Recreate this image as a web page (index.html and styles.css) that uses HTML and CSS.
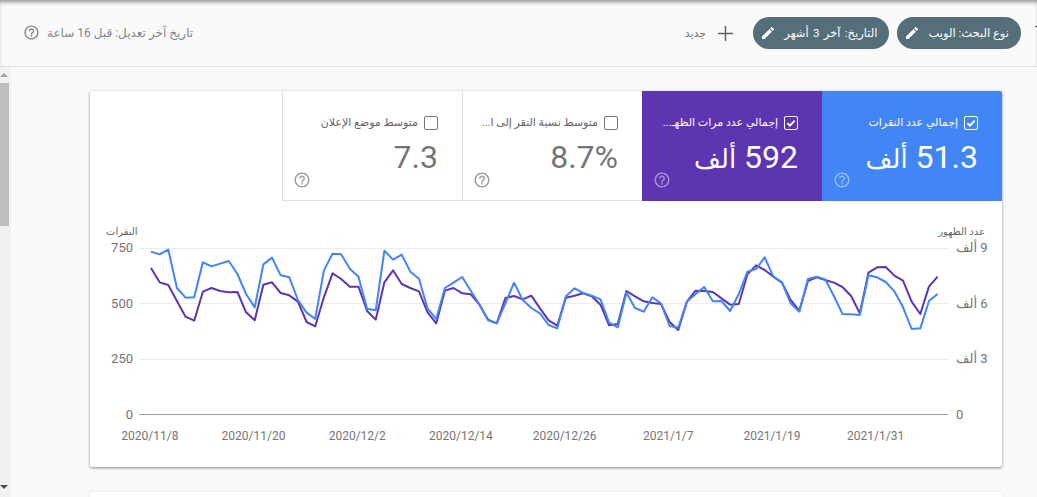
FILE: index.html
```html
<!DOCTYPE html>
<html lang="ar" dir="rtl">
<head>
<meta charset="utf-8">
<title>Performance</title>
<link rel="stylesheet" href="styles.css">
</head>
<body>
<svg class="defs" width="0" height="0" aria-hidden="true">
  <symbol id="help" viewBox="0 0 24 24"><path d="M11 18h2v-2h-2v2zm1-16C6.48 2 2 6.48 2 12s4.48 10 10 10 10-4.48 10-10S17.52 2 12 2zm0 18c-4.41 0-8-3.59-8-8s3.59-8 8-8 8 3.59 8 8-3.59 8-8 8zm0-14c-2.21 0-4 1.79-4 4h2c0-1.1.9-2 2-2s2 .9 2 2c0 2-3 1.75-3 5h2c0-2.25 3-2.5 3-5 0-2.21-1.79-4-4-4z"/></symbol>
  <symbol id="pencil" viewBox="0 0 24 24"><path d="M3 17.25V21h3.75L17.81 9.94l-3.75-3.75L3 17.25zM20.71 7.04a1 1 0 0 0 0-1.41l-2.34-2.34a1 1 0 0 0-1.41 0l-1.83 1.83 3.75 3.75 1.83-1.83z"/></symbol>
  <symbol id="check" viewBox="0 0 14 14"><path d="M2.8 7.2l2.9 2.9 5.6-5.8" fill="none" stroke="currentColor" stroke-width="2"/></symbol>
</svg>

<header class="topbar">
  <span class="clipped-icon"></span>
  <div class="chip"><span>نوع البحث: الويب</span><svg class="chip-icon"><use href="#pencil"/></svg></div>
  <div class="chip chip-wide"><span>التاريخ: آخر 3 أشهر</span><svg class="chip-icon"><use href="#pencil"/></svg></div>
  <button class="new-btn">
    <svg class="plus" viewBox="0 0 16 16"><path d="M7.2 0h1.6v7.2H16v1.6H8.8V16H7.2V8.8H0V7.2h7.2z"/></svg>
    <span>جديد</span>
  </button>
  <div class="updated"><span>تاريخ آخر تعديل: قبل 16 ساعة</span><svg class="help help-top"><use href="#help"/></svg></div>
</header>

<div class="main">
  <div class="content">
    <section class="card">
      <div class="tiles">
        <div class="tile tile-blue">
          <div class="tile-head"><span class="box"><svg><use href="#check"/></svg></span><span class="tile-label">إجمالي عدد النقرات</span></div>
          <div class="tile-value">51.3 <span class="unit">ألف</span></div>
          <svg class="help"><use href="#help"/></svg>
        </div>
        <div class="tile tile-purple">
          <div class="tile-head"><span class="box"><svg><use href="#check"/></svg></span><span class="tile-label">إجمالي عدد مرات الظهـ...</span></div>
          <div class="tile-value">592 <span class="unit">ألف</span></div>
          <svg class="help"><use href="#help"/></svg>
        </div>
        <div class="tile tile-plain">
          <div class="tile-head"><span class="box"></span><span class="tile-label">متوسط نسبة النقر إلى ا...</span></div>
          <div class="tile-value">8.7%</div>
          <svg class="help"><use href="#help"/></svg>
        </div>
        <div class="tile tile-plain">
          <div class="tile-head"><span class="box"></span><span class="tile-label">متوسط موضع الإعلان</span></div>
          <div class="tile-value">7.3</div>
          <svg class="help"><use href="#help"/></svg>
        </div>
      </div>

      <div class="chart" dir="ltr">
        <div class="axis-titles">
          <span dir="rtl">النقرات</span>
          <span dir="rtl">عدد الظهور</span>
        </div>
        <div class="chart-body">
          <div class="y-axis y-left"><span>750</span><span>500</span><span>250</span><span>0</span></div>
          <div class="plot">
            <div class="grid-row"></div>
            <div class="grid-row"></div>
            <div class="grid-row"></div>
            <div class="grid-base"></div>
            <svg class="lines" viewBox="0 0 91 390" preserveAspectRatio="none">
              <polyline class="line-purple" points="0,144 1,187 2,195 3,243 4,290 5,302 6,215 7,204 8,213 9,217 10,216 11,277 12,301 13,194 14,187 15,219 16,226 17,245 18,306 19,319 20,232 21,160 22,177 23,200 24,200 25,273 26,299 27,187 28,151 29,192 30,204 31,214 32,277 33,310 34,212 35,204 36,220 37,223 38,254 39,299 40,310 41,234 42,228 43,238 44,227 45,265 46,301 47,317 48,233 49,227 50,220 51,229 52,254 53,316 54,312 55,213 56,229 57,244 58,249 59,252 60,306 61,330 62,245 63,212 64,213 65,216 66,235 67,254 68,252 69,163 70,136 71,150 72,170 73,188 74,240 75,272 76,183 77,172 78,180 79,188 80,201 81,228 82,280 83,158 84,142 85,141 86,167 87,182 88,245 89,282 90,200 91,170"/>
              <polyline class="line-blue" points="0,95 1,103 2,89 3,204 4,233 5,232 6,127 7,139 8,131 9,123 10,162 11,222 12,262 13,133 14,113 15,166 16,172 17,240 18,278 19,297 20,152 21,101 22,103 23,146 24,170 25,266 26,271 27,92 28,119 29,104 30,155 31,176 32,266 33,297 34,204 35,188 36,171 37,212 38,254 39,301 40,310 41,250 42,188 43,240 44,264 45,280 46,315 47,325 48,229 49,205 50,219 51,227 52,238 53,308 54,322 55,218 56,264 57,275 58,232 59,250 60,318 61,323 62,245 63,222 64,201 65,244 66,243 67,273 68,222 69,155 70,147 71,112 72,170 73,188 74,250 75,275 76,177 77,170 78,178 79,228 80,282 81,283 82,285 83,166 84,172 85,186 86,214 87,262 88,327 89,325 90,243 91,222"/>
            </svg>
          </div>
          <div class="y-axis y-right"><span dir="rtl">9 ألف</span><span dir="rtl">6 ألف</span><span dir="rtl">3 ألف</span><span>0</span></div>
        </div>
        <div class="x-axis">
          <span>2020/11/8</span><span>2020/11/20</span><span>2020/12/2</span><span>2020/12/14</span><span>2020/12/26</span><span>2021/1/7</span><span>2021/1/19</span><span>2021/1/31</span>
        </div>
      </div>
    </section>
    <section class="card card-next"></section>
  </div>
  <div class="scrollbar">
    <span class="arrow arrow-up"></span>
    <span class="thumb"></span>
    <span class="arrow arrow-down"></span>
  </div>
</div>
</body>
</html>
```
FILE: styles.css
```css
* { box-sizing: border-box; }
html, body { margin: 0; height: 100%; }
body {
  height: 497px;
  overflow: hidden;
  background: #f9f9f9;
  font-family: Roboto, "Liberation Sans", "DejaVu Sans", sans-serif;
  color: #757575;
}
.defs { position: absolute; }

/* top bar */
.topbar {
  height: 67px;
  display: flex;
  align-items: center;
  background: #fafafa;
  border-bottom: 1px solid #e0e0e0;
  box-shadow: inset 0 4px 4px -2px #909090;
  padding-left: 23px;
}
.clipped-icon {
  width: 3px;
  height: 1px;
  margin-top: -13px;
  margin-right: -1px;
  margin-left: 14px;
  background: #555;
  flex: none;
}
.chip {
  height: 32px;
  display: flex;
  align-items: center;
  gap: 8px;
  padding: 0 12px 0 7px;
  margin-left: 8px;
  border-radius: 16px;
  background: #546e7a;
  color: #fff;
  font-size: 11.5px;
  white-space: nowrap;
}
.chip-wide { word-spacing: 1.5px; }
.chip-icon { width: 16px; height: 16px; fill: #fff; flex: none; }
.new-btn {
  display: flex;
  align-items: center;
  gap: 12px;
  margin-right: 12px;
  padding: 0;
  border: 0;
  background: none;
  font: inherit;
  font-size: 11px;
  color: #757575;
}
.plus { width: 15px; height: 15px; fill: #5f6368; }
.updated {
  margin-right: auto;
  margin-top: -1px;
  display: flex;
  align-items: center;
  gap: 7px;
  font-size: 12px;
  color: #80868b;
}
.help { width: 18px; height: 18px; fill: #9e9e9e; flex: none; }
.help-top { width: 17px; height: 17px; fill: #80868b; }

/* main area */
.main { display: flex; height: 430px; }
.content { flex: 1; padding: 24px 35px 0 79px; overflow: hidden; }
.card {
  width: 912px;
  height: 376px;
  background: #fff;
  border-radius: 2px;
  box-shadow: 0 1px 3px rgba(0, 0, 0, .45);
  overflow: hidden;
}
.card-next { margin-top: 25px; height: 40px; box-shadow: 0 0 2px rgba(0, 0, 0, .15); }

/* scrollbar */
.scrollbar {
  width: 11px;
  flex: none;
  display: flex;
  flex-direction: column;
  align-items: flex-end;
  background: #f1f1f1;
}
.thumb { width: 9px; margin: 6px 2px 0 0; height: 143px; background: #bdbdbd; }
.arrow { width: 0; height: 0; border-left: 4px solid transparent; border-right: 4px solid transparent; margin-right: 1px; }
.arrow-up { margin-top: 6px; border-bottom: 4px solid #a0a0a0; }
.arrow-down { margin-top: auto; margin-bottom: 8px; border-top: 4px solid #505050; }

/* tiles */
.tiles { display: flex; height: 110px; }
.tile {
  width: 180px;
  height: 110px;
  flex: none;
  display: flex;
  flex-direction: column;
  padding: 25px 24px 12px 11px;
}
.tile-blue { background: #4285f4; color: #fff; }
.tile-purple { background: #5e35b1; color: #fff; }
.tile-plain { border-left: 1px solid #e0e0e0; border-bottom: 1px solid #e0e0e0; padding-bottom: 11px; padding-left: 10px; }
.tile-head { display: flex; align-items: center; gap: 6px; height: 14px; font-size: 11px; color: #5f6368; }
.tile-blue .tile-head, .tile-purple .tile-head { color: #fff; }
.tile-label { white-space: nowrap; line-height: 14px; }
.box {
  width: 14px;
  height: 14px;
  flex: none;
  border: 1px solid #757575;
  border-radius: 2px;
}
.tile-blue .box, .tile-purple .box { border-color: #fff; }
.box svg { display: block; width: 12px; height: 12px; color: #fff; }
.tile-value { font-size: 32px; line-height: 28px; height: 28px; margin-top: 13px; flex: none; }
.unit { font-size: 26px; }
.tile .help { margin-top: auto; align-self: flex-end; }
.tile-blue .help, .tile-purple .help { fill: rgba(255, 255, 255, .45); }

/* chart */
.chart { padding-top: 23px; }
.axis-titles {
  display: flex;
  justify-content: space-between;
  padding: 0 17px 0 16px;
  height: 16px;
  font-size: 10px;
  line-height: 16px;
  color: #5f6368;
}
.chart-body {
  display: grid;
  grid-template-columns: 49px 809px 54px;
  margin-top: 8px;
}
.y-axis {
  display: flex;
  flex-direction: column;
  justify-content: space-between;
  margin: -8px 0;
  font-size: 13px;
  line-height: 16px;
}
.y-left { align-items: flex-end; padding-right: 6px; }
.y-right { align-items: flex-start; padding-left: 8px; }
.plot { position: relative; height: 167px; }
.grid-row { height: 55.4px; border-top: 1px solid #ececec; }
.grid-base { border-top: 1px solid #9e9e9e; }
.lines {
  position: absolute;
  left: 11.7px;
  top: -28px;
  width: 786.6px;
  height: 130px;
  overflow: visible;
}
.lines polyline { fill: none; stroke-width: 2; vector-effect: non-scaling-stroke; stroke-linejoin: round; }
.line-blue { stroke: #4285f4; }
.line-purple { stroke: #5e35b1; }
.x-axis {
  display: flex;
  padding-left: 8px;
  margin-top: 13px;
  font-size: 12px;
  line-height: 16px;
}
.x-axis span { width: 103.7px; flex: none; text-align: center; }
```
